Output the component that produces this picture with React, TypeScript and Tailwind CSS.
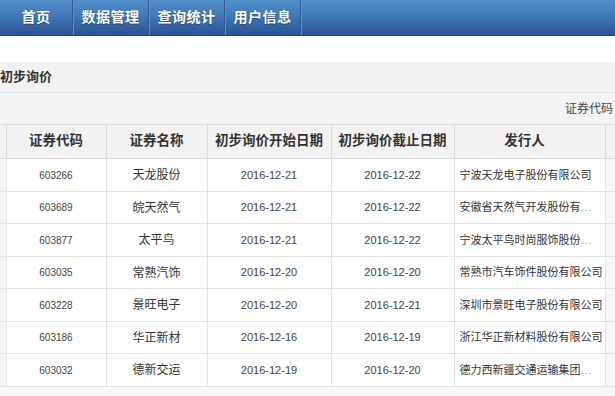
import React from 'react';

const navItems = ['首页', '数据管理', '查询统计', '用户信息'];

const rows = [
  { code: '603266', name: '天龙股份', start: '2016-12-21', end: '2016-12-22', issuer: '宁波天龙电子股份有限公司', cut: false },
  { code: '603689', name: '皖天然气', start: '2016-12-21', end: '2016-12-22', issuer: '安徽省天然气开发股份有', cut: true },
  { code: '603877', name: '太平鸟', start: '2016-12-21', end: '2016-12-22', issuer: '宁波太平鸟时尚服饰股份', cut: true },
  { code: '603035', name: '常熟汽饰', start: '2016-12-20', end: '2016-12-20', issuer: '常熟市汽车饰件股份有限公司', cut: false },
  { code: '603228', name: '景旺电子', start: '2016-12-20', end: '2016-12-21', issuer: '深圳市景旺电子股份有限公司', cut: false },
  { code: '603186', name: '华正新材', start: '2016-12-16', end: '2016-12-19', issuer: '浙江华正新材料股份有限公司', cut: false },
  { code: '603032', name: '德新交运', start: '2016-12-19', end: '2016-12-20', issuer: '德力西新疆交通运输集团', cut: true },
];

export default function App() {
  return (
    <div className="w-[615px] h-[396px] overflow-hidden bg-white text-[#333] font-['Liberation_Sans','Noto_Sans_CJK_SC',sans-serif]">
      {/* top nav */}
      <nav className="h-[36px] flex bg-gradient-to-b from-[#5190cb] via-[#3f75b3] to-[#2a5391] border-b border-[#1f4479]">
        {navItems.map((item, i) => (
          <div
            key={item}
            className={
              (i === 0 ? 'w-[73px] ' : 'w-[76px] ') +
              'flex items-center justify-center text-white text-[14px] font-bold tracking-[0.5px] border-r border-[#2c5a94] shadow-[1px_0_0_#5a92c9] [text-shadow:0_1px_1px_rgba(0,0,0,0.35)]'
            }
          >
            {item}
          </div>
        ))}
      </nav>

      <div className="h-[26px] bg-white" />

      <div className="bg-[#f2f2f2]">
        <div className="h-[31px] flex items-center border-b border-[#e2e2e2] text-[13px] font-bold">
          初步询价
        </div>
        <div className="h-[31px] flex items-center justify-end pr-[2px] text-[12px] text-[#444] bg-[#f4f4f4]">
          证券代码
        </div>

        <div className="w-[615px] overflow-hidden">
          <table className="w-[650px] table-fixed border-collapse">
            <colgroup>
              <col className="w-[6px]" />
              <col className="w-[100px]" />
              <col className="w-[101px]" />
              <col className="w-[124px]" />
              <col className="w-[123px]" />
              <col className="w-[151px]" />
              <col className="w-[45px]" />
            </colgroup>
            <thead>
              <tr className="h-[34px] bg-[#f2f2f2] text-[13.5px] font-bold text-[#333]">
                <th className="border border-[#dadada] border-l-0" />
                <th className="border border-[#dadada]">证券代码</th>
                <th className="border border-[#dadada]">证券名称</th>
                <th className="border border-[#dadada] whitespace-nowrap">初步询价开始日期</th>
                <th className="border border-[#dadada] whitespace-nowrap">初步询价截止日期</th>
                <th className="border border-[#dadada] pr-[10px]">发行人</th>
                <th className="border border-[#dadada]" />
              </tr>
            </thead>
            <tbody>
              {rows.map((r, i) => (
                <tr key={r.code} className={(i % 2 === 0 ? 'h-[33px]' : 'h-[32px]') + ' bg-white'}>
                  <td className="bg-[#f4f4f4] border border-[#e3e3e3] border-l-0" />
                  <td className="border border-[#e3e3e3] text-center text-[10px] text-[#444]">{r.code}</td>
                  <td className="border border-[#e3e3e3] text-center text-[12px] text-[#333]">{r.name}</td>
                  <td className="border border-[#e3e3e3] text-center text-[11px] text-[#444]">{r.start}</td>
                  <td className="border border-[#e3e3e3] text-center text-[11px] text-[#444]">{r.end}</td>
                  <td className="border border-[#e3e3e3] pl-[5px] text-[11px] text-[#333] whitespace-nowrap overflow-hidden">
                    {r.issuer}
                    {r.cut && <span className="text-[#999] tracking-[1px]">...</span>}
                  </td>
                  <td className="bg-[#f6f6f6] border border-[#e3e3e3]" />
                </tr>
              ))}
            </tbody>
          </table>
        </div>
        <div className="h-[12px] bg-[#f7f7f7]" />
      </div>
    </div>
  );
}
